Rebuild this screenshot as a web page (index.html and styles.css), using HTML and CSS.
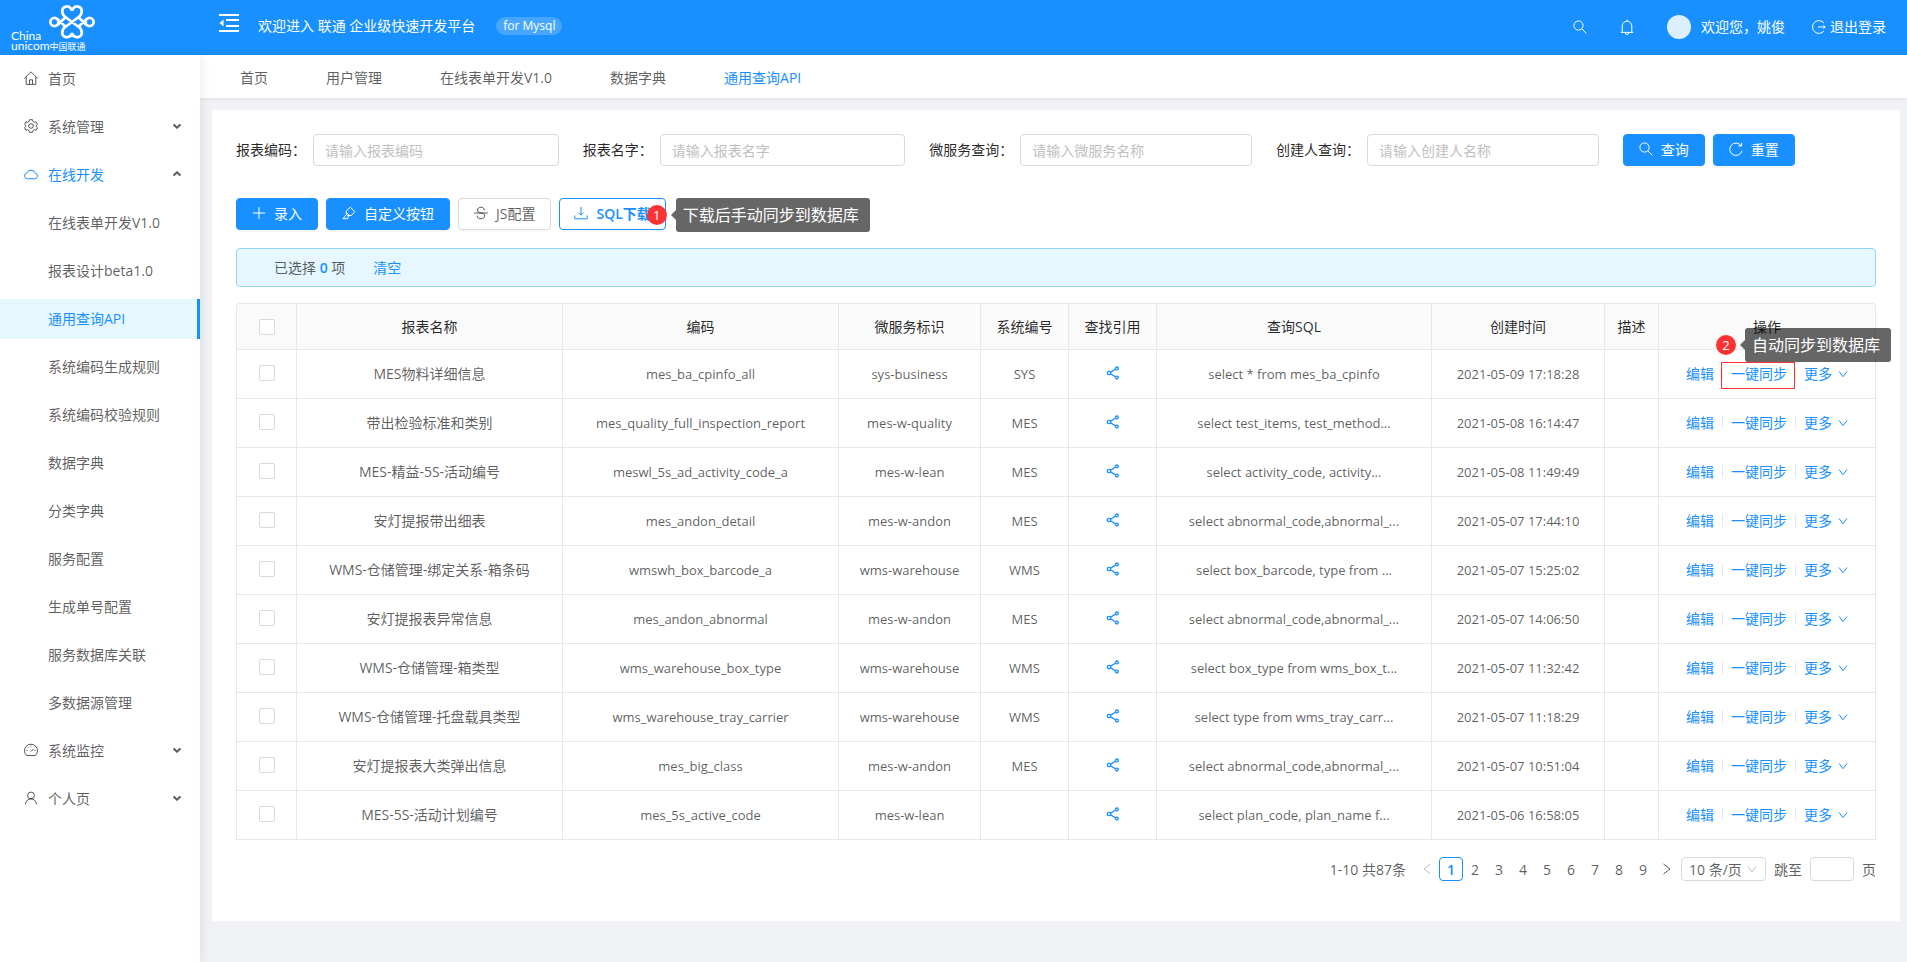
FILE: index.html
```html
<!DOCTYPE html>
<html lang="zh-CN">
<head>
    <meta charset="UTF-8">
    <meta name="viewport" content="width=device-width, initial-scale=1.0">
    <title>通用查询API</title>
    <link rel="stylesheet" href="styles.css">
</head>
<body>
    <!-- icons -->
    <svg class="sprite" aria-hidden="true">
        <symbol id="i-home" viewBox="0 0 14 14"><path d="M.4 7.400 7 .8l6.600 6.600M2.200 6v7.400h9.600V6M5.500 13V8.800h3V13"/></symbol>
        <symbol id="i-setting" viewBox="0 0 14 14"><path d="M5.500.7h3l.5 1.800 1.300.8 1.800-.5 1.400 2.500-1.300 1.200v1l1.300 1.200-1.400 2.500-1.800-.5-1.300.8-.5 1.800h-3L5 11.500l-1.300-.8-1.800.5L.5 8.700l1.300-1.200v-1L.5 5.300l1.400-2.500 1.800.5L5 2.500z"/><circle cx="7" cy="7" r="2.300"/></symbol>
        <symbol id="i-cloud" viewBox="0 0 14 14"><path d="M3.300 11.800h7.400a2.900 2.900 0 0 0 .6-5.700 4.600 4.600 0 0 0-8.600 0 2.900 2.900 0 0 0 .6 5.700z"/></symbol>
        <symbol id="i-dash" viewBox="0 0 14 14"><path d="M2.600 12.500a6.500 6.500 0 1 1 8.800 0zM7 8.500l2.600-2.600M7 2.600v1M2.500 7.500h1M10.500 7.500h1M3.800 4.300l.7.700"/></symbol>
        <symbol id="i-user" viewBox="0 0 14 14"><circle cx="7" cy="4.500" r="3.400"/><path d="M1.500 13.300c.2-3.200 2.500-5.400 5.500-5.400s5.300 2.200 5.500 5.400"/></symbol>
        <symbol id="i-down" viewBox="0 0 10 10"><path d="M1 2.500 5 7.700 9 2.500"/></symbol>
        <symbol id="i-arrow" viewBox="0 0 10 10"><path d="M1.500 3.500 5 6.700l3.500-3.200"/></symbol>
        <symbol id="i-left" viewBox="0 0 10 14"><path d="M8.500 2 2 7l6.500 5"/></symbol>
        <symbol id="i-search" viewBox="0 0 14 14"><circle cx="5.500" cy="5.500" r="4.600"/><path d="m8.900 8.900 4.600 4.600"/></symbol>
        <symbol id="i-bell" viewBox="0 0 14 16"><path d="M.8 13.400h12.400M2.200 13V7a4.800 4.800 0 0 1 9.600 0v6M7 2.200V.5M5.200 13.700a1.800 1.800 0 0 0 3.600 0"/></symbol>
        <symbol id="i-logout" viewBox="0 0 14 14"><path d="M12 3.100a6.400 6.400 0 1 0 0 7.800M6 7h7.300M11.500 5.300 13.200 7l-1.700 1.700"/></symbol>
        <symbol id="i-reload" viewBox="0 0 14 14"><path d="M12 3.600a6.200 6.200 0 1 0 1 5.200M12.600.8v3.200H9.400"/></symbol>
        <symbol id="i-plus" viewBox="0 0 14 14"><path d="M7 1v12M1 7h12"/></symbol>
        <symbol id="i-light" viewBox="0 0 14 14"><path d="M8.300 1.200 12.800 5.700 9.300 9.500H5.500L4.300 8.300V5zM4.600 8.300 1 12.700h4.500l1.200-3M7.300 9.300 4.600 6.600"/></symbol>
        <symbol id="i-strike" viewBox="0 0 14 14"><path d="M.2 7h13.600M10.500 4.200C10.200 2.200 8.900 1.200 7 1.200S3.500 2.300 3.500 4.200C3.500 5.700 4.700 6.500 7 7s3.700 1.200 3.700 2.800S9.300 12.800 7 12.800s-3.700-1.100-3.900-3.100"/></symbol>
        <symbol id="i-download" viewBox="0 0 14 14"><path d="M7 1v8M4.500 6.700 7 9.200l2.500-2.500M.8 9.500v3.300h12.400V9.500"/></symbol>
        <symbol id="i-share" viewBox="0 0 14 14"><path d="m4.500 6.100 5-2.900M4.500 7.900l5 2.900"/><circle cx="3" cy="7" r="1.700"/><circle cx="10.900" cy="2.400" r="1.400"/><circle cx="10.900" cy="11.600" r="1.400"/></symbol>
    </svg>

    <header class="header">
        <div class="logo">
            <svg class="logo-knot" viewBox="130 8 136 106" aria-hidden="true">
                <path d="M155 70 179 47C167 39 165 20 178 16c9-3 18 2 20 12 2-10 11-15 20-12 13 4 11 23-1 31l24 23M155 52l24 23c-12 8-14 26-1 30 9 3 18-2 20-11 2 9 11 14 20 11 13-4 11-22-1-30l24-23M179 47l38 28M217 47l-38 28"/>
                <circle cx="146" cy="61" r="12"/>
                <circle cx="250" cy="61" r="12"/>
            </svg>
            <div class="logo-text"><span>China</span><span>unicom<small>中国联通</small></span></div>
        </div>
        <button class="fold" aria-label="收起菜单">
            <svg viewBox="0 0 20 18" aria-hidden="true"><path d="M0 1h20M7 6h13M7 12h13M0 17h20"/><path class="solid" d="M4.500 5.500v7L.500 9z"/></svg>
        </button>
        <span class="title">欢迎进入 联通 企业级快速开发平台</span>
        <span class="db">for Mysql</span>
        <div class="header-right">
            <button class="bare" aria-label="搜索"><svg class="icon"><use href="#i-search"/></svg></button>
            <button class="bare" aria-label="通知"><svg class="icon bell"><use href="#i-bell"/></svg></button>
            <div class="welcome"><span class="avatar"></span><span>欢迎您，姚俊</span></div>
            <a href="#" class="logout"><svg class="icon"><use href="#i-logout"/></svg>退出登录</a>
        </div>
    </header>

    <div class="layout">
        <nav class="sidebar">
            <a href="#"><svg class="icon"><use href="#i-home"/></svg>首页</a>
            <a href="#"><svg class="icon"><use href="#i-setting"/></svg>系统管理<svg class="arrow"><use href="#i-arrow"/></svg></a>
            <a href="#" class="open"><svg class="icon"><use href="#i-cloud"/></svg>在线开发<svg class="arrow up"><use href="#i-arrow"/></svg></a>
            <a href="#" class="sub">在线表单开发V1.0</a>
            <a href="#" class="sub">报表设计beta1.0</a>
            <a href="#" class="sub active">通用查询API</a>
            <a href="#" class="sub">系统编码生成规则</a>
            <a href="#" class="sub">系统编码校验规则</a>
            <a href="#" class="sub">数据字典</a>
            <a href="#" class="sub">分类字典</a>
            <a href="#" class="sub">服务配置</a>
            <a href="#" class="sub">生成单号配置</a>
            <a href="#" class="sub">服务数据库关联</a>
            <a href="#" class="sub">多数据源管理</a>
            <a href="#"><svg class="icon"><use href="#i-dash"/></svg>系统监控<svg class="arrow"><use href="#i-arrow"/></svg></a>
            <a href="#"><svg class="icon"><use href="#i-user"/></svg>个人页<svg class="arrow"><use href="#i-arrow"/></svg></a>
        </nav>

        <main class="main">
            <div class="tabs">
                <a href="#">首页</a>
                <a href="#">用户管理</a>
                <a href="#">在线表单开发V1.0</a>
                <a href="#">数据字典</a>
                <a href="#" class="active">通用查询API</a>
            </div>

            <section class="card">
                <form class="search">
                    <div class="field"><label for="code">报表编码：</label><input id="code" type="text" placeholder="请输入报表编码"></div>
                    <div class="field"><label for="name">报表名字：</label><input id="name" type="text" placeholder="请输入报表名字"></div>
                    <div class="field"><label for="service">微服务查询：</label><input id="service" type="text" placeholder="请输入微服务名称"></div>
                    <div class="field"><label for="creator">创建人查询：</label><input id="creator" type="text" placeholder="请输入创建人名称"></div>
                    <div class="search-btns">
                        <button type="button" class="btn primary"><svg class="icon"><use href="#i-search"/></svg>查询</button>
                        <button type="button" class="btn primary"><svg class="icon"><use href="#i-reload"/></svg>重置</button>
                    </div>
                </form>

                <div class="toolbar">
                    <button class="btn primary"><svg class="icon"><use href="#i-plus"/></svg>录入</button>
                    <button class="btn primary"><svg class="icon"><use href="#i-light"/></svg>自定义按钮</button>
                    <button class="btn"><svg class="icon"><use href="#i-strike"/></svg>JS配置</button>
                    <div class="mark-wrap">
                        <button class="btn ghost"><svg class="icon"><use href="#i-download"/></svg>SQL下载</button>
                        <span class="num num-download">1</span>
                        <span class="tip tip-download">下载后手动同步到数据库</span>
                    </div>
                </div>

                <div class="alert">
                    <span>已选择 <b>0</b> 项</span>
                    <a href="#">清空</a>
                </div>

                <table class="table">
                    <colgroup>
                        <col class="c-check"><col class="c-name"><col class="c-code"><col class="c-service"><col class="c-sys"><col class="c-ref"><col class="c-sql"><col class="c-time"><col class="c-desc"><col class="c-action">
                    </colgroup>
                    <thead>
                        <tr>
                            <th><input type="checkbox" aria-label="全选"></th>
                            <th>报表名称</th>
                            <th>编码</th>
                            <th>微服务标识</th>
                            <th>系统编号</th>
                            <th>查找引用</th>
                            <th>查询SQL</th>
                            <th>创建时间</th>
                            <th>描述</th>
                            <th>操作</th>
                        </tr>
                    </thead>
                    <tbody>
                        <tr>
                            <td><input type="checkbox" aria-label="选择"></td>
                            <td>MES物料详细信息</td>
                            <td class="en">mes_ba_cpinfo_all</td>
                            <td class="en">sys-business</td>
                            <td class="en">SYS</td>
                            <td><a href="#" aria-label="引用"><svg class="icon share"><use href="#i-share"/></svg></a></td>
                            <td class="en">select * from mes_ba_cpinfo</td>
                            <td class="en">2021-05-09 17:18:28</td>
                            <td></td>
                            <td>
                                <div class="actions">
                                    <a href="#">编辑</a><i></i>
                                    <span class="mark-wrap">
                                        <a href="#">一键同步</a>
                                        <span class="frame"></span>
                                        <span class="num num-sync">2</span>
                                        <span class="tip tip-sync">自动同步到数据库</span>
                                    </span><i></i>
                                    <a href="#">更多<svg class="down"><use href="#i-down"/></svg></a>
                                </div>
                            </td>
                        </tr>
                        <tr>
                            <td><input type="checkbox" aria-label="选择"></td>
                            <td>带出检验标准和类别</td>
                            <td class="en">mes_quality_full_inspection_report</td>
                            <td class="en">mes-w-quality</td>
                            <td class="en">MES</td>
                            <td><a href="#" aria-label="引用"><svg class="icon share"><use href="#i-share"/></svg></a></td>
                            <td class="en">select test_items, test_method...</td>
                            <td class="en">2021-05-08 16:14:47</td>
                            <td></td>
                            <td><div class="actions"><a href="#">编辑</a><i></i><a href="#">一键同步</a><i></i><a href="#">更多<svg class="down"><use href="#i-down"/></svg></a></div></td>
                        </tr>
                        <tr>
                            <td><input type="checkbox" aria-label="选择"></td>
                            <td>MES-精益-5S-活动编号</td>
                            <td class="en">meswl_5s_ad_activity_code_a</td>
                            <td class="en">mes-w-lean</td>
                            <td class="en">MES</td>
                            <td><a href="#" aria-label="引用"><svg class="icon share"><use href="#i-share"/></svg></a></td>
                            <td class="en">select activity_code, activity...</td>
                            <td class="en">2021-05-08 11:49:49</td>
                            <td></td>
                            <td><div class="actions"><a href="#">编辑</a><i></i><a href="#">一键同步</a><i></i><a href="#">更多<svg class="down"><use href="#i-down"/></svg></a></div></td>
                        </tr>
                        <tr>
                            <td><input type="checkbox" aria-label="选择"></td>
                            <td>安灯提报带出细表</td>
                            <td class="en">mes_andon_detail</td>
                            <td class="en">mes-w-andon</td>
                            <td class="en">MES</td>
                            <td><a href="#" aria-label="引用"><svg class="icon share"><use href="#i-share"/></svg></a></td>
                            <td class="en">select abnormal_code,abnormal_...</td>
                            <td class="en">2021-05-07 17:44:10</td>
                            <td></td>
                            <td><div class="actions"><a href="#">编辑</a><i></i><a href="#">一键同步</a><i></i><a href="#">更多<svg class="down"><use href="#i-down"/></svg></a></div></td>
                        </tr>
                        <tr>
                            <td><input type="checkbox" aria-label="选择"></td>
                            <td>WMS-仓储管理-绑定关系-箱条码</td>
                            <td class="en">wmswh_box_barcode_a</td>
                            <td class="en">wms-warehouse</td>
                            <td class="en">WMS</td>
                            <td><a href="#" aria-label="引用"><svg class="icon share"><use href="#i-share"/></svg></a></td>
                            <td class="en">select box_barcode, type from ...</td>
                            <td class="en">2021-05-07 15:25:02</td>
                            <td></td>
                            <td><div class="actions"><a href="#">编辑</a><i></i><a href="#">一键同步</a><i></i><a href="#">更多<svg class="down"><use href="#i-down"/></svg></a></div></td>
                        </tr>
                        <tr>
                            <td><input type="checkbox" aria-label="选择"></td>
                            <td>安灯提报表异常信息</td>
                            <td class="en">mes_andon_abnormal</td>
                            <td class="en">mes-w-andon</td>
                            <td class="en">MES</td>
                            <td><a href="#" aria-label="引用"><svg class="icon share"><use href="#i-share"/></svg></a></td>
                            <td class="en">select abnormal_code,abnormal_...</td>
                            <td class="en">2021-05-07 14:06:50</td>
                            <td></td>
                            <td><div class="actions"><a href="#">编辑</a><i></i><a href="#">一键同步</a><i></i><a href="#">更多<svg class="down"><use href="#i-down"/></svg></a></div></td>
                        </tr>
                        <tr>
                            <td><input type="checkbox" aria-label="选择"></td>
                            <td>WMS-仓储管理-箱类型</td>
                            <td class="en">wms_warehouse_box_type</td>
                            <td class="en">wms-warehouse</td>
                            <td class="en">WMS</td>
                            <td><a href="#" aria-label="引用"><svg class="icon share"><use href="#i-share"/></svg></a></td>
                            <td class="en">select box_type from wms_box_t...</td>
                            <td class="en">2021-05-07 11:32:42</td>
                            <td></td>
                            <td><div class="actions"><a href="#">编辑</a><i></i><a href="#">一键同步</a><i></i><a href="#">更多<svg class="down"><use href="#i-down"/></svg></a></div></td>
                        </tr>
                        <tr>
                            <td><input type="checkbox" aria-label="选择"></td>
                            <td>WMS-仓储管理-托盘载具类型</td>
                            <td class="en">wms_warehouse_tray_carrier</td>
                            <td class="en">wms-warehouse</td>
                            <td class="en">WMS</td>
                            <td><a href="#" aria-label="引用"><svg class="icon share"><use href="#i-share"/></svg></a></td>
                            <td class="en">select type from wms_tray_carr...</td>
                            <td class="en">2021-05-07 11:18:29</td>
                            <td></td>
                            <td><div class="actions"><a href="#">编辑</a><i></i><a href="#">一键同步</a><i></i><a href="#">更多<svg class="down"><use href="#i-down"/></svg></a></div></td>
                        </tr>
                        <tr>
                            <td><input type="checkbox" aria-label="选择"></td>
                            <td>安灯提报表大类弹出信息</td>
                            <td class="en">mes_big_class</td>
                            <td class="en">mes-w-andon</td>
                            <td class="en">MES</td>
                            <td><a href="#" aria-label="引用"><svg class="icon share"><use href="#i-share"/></svg></a></td>
                            <td class="en">select abnormal_code,abnormal_...</td>
                            <td class="en">2021-05-07 10:51:04</td>
                            <td></td>
                            <td><div class="actions"><a href="#">编辑</a><i></i><a href="#">一键同步</a><i></i><a href="#">更多<svg class="down"><use href="#i-down"/></svg></a></div></td>
                        </tr>
                        <tr>
                            <td><input type="checkbox" aria-label="选择"></td>
                            <td>MES-5S-活动计划编号</td>
                            <td class="en">mes_5s_active_code</td>
                            <td class="en">mes-w-lean</td>
                            <td class="en"></td>
                            <td><a href="#" aria-label="引用"><svg class="icon share"><use href="#i-share"/></svg></a></td>
                            <td class="en">select plan_code, plan_name f...</td>
                            <td class="en">2021-05-06 16:58:05</td>
                            <td></td>
                            <td><div class="actions"><a href="#">编辑</a><i></i><a href="#">一键同步</a><i></i><a href="#">更多<svg class="down"><use href="#i-down"/></svg></a></div></td>
                        </tr>
                    </tbody>
                </table>

                <div class="pager">
                    <span class="total">1-10 共87条</span>
                    <button class="page prev" aria-label="上一页" disabled><svg class="step"><use href="#i-left"/></svg></button>
                    <button class="page current">1</button>
                    <button class="page">2</button>
                    <button class="page">3</button>
                    <button class="page">4</button>
                    <button class="page">5</button>
                    <button class="page">6</button>
                    <button class="page">7</button>
                    <button class="page">8</button>
                    <button class="page">9</button>
                    <button class="page" aria-label="下一页"><svg class="step next"><use href="#i-left"/></svg></button>
                    <div class="size">
                        <select aria-label="每页条数"><option>10 条/页</option></select>
                        <svg class="down"><use href="#i-down"/></svg>
                    </div>
                    <label for="jump">跳至</label>
                    <input id="jump" class="jump" type="text">
                    <span>页</span>
                </div>
            </section>
        </main>
    </div>
</body>
</html>
```
FILE: styles.css
```css
* {
    box-sizing: border-box;
}
body {
    margin: 0;
    min-height: 100vh;
    display: flex;
    flex-direction: column;
    background: #f0f2f5;
    color: rgba(0, 0, 0, 0.65);
    font-family: "Open Sans", "Noto Sans CJK SC", sans-serif;
    font-size: 14px;
    line-height: 21px;
}
a {
    color: #1890ff;
    text-decoration: none;
}
button, input, select {
    font: inherit;
    color: inherit;
}
button {
    cursor: pointer;
}
svg {
    fill: none;
    stroke: currentColor;
    flex: none;
}
.sprite {
    position: absolute;
    width: 0;
    height: 0;
}
.icon {
    width: 14px;
    height: 14px;
}

/* header */
.header {
    display: flex;
    align-items: center;
    height: 55px;
    padding-right: 21px;
    background: #1890ff;
    color: #fff;
}
.logo {
    position: relative;
    width: 219px;
    height: 55px;
    padding-top: 31px;
}
.logo-knot {
    position: absolute;
    left: 49px;
    top: 4px;
    width: 46px;
    height: 36px;
    stroke-width: 8px;
}
.logo-text {
    display: flex;
    flex-direction: column;
    padding-left: 11px;
    font-family: "Lato", "Noto Sans CJK SC", sans-serif;
    font-size: 12px;
    line-height: 10px;
}
.logo-text small {
    font-size: 9px;
}
.fold {
    display: flex;
    padding: 0;
    border: 0;
    background: none;
    margin: 0 19px 9px 0;
}
.fold svg {
    width: 20px;
    height: 18px;
    stroke-width: 2px;
}
.fold .solid {
    fill: currentColor;
    stroke: none;
}
.title {
    margin-bottom: 4px;
}
.db {
    margin: 0 0 4px 21px;
    padding: 0 7px;
    border-radius: 9px;
    background: rgba(255, 255, 255, 0.2);
    font-size: 12px;
    line-height: 18px;
}
.header-right {
    display: flex;
    align-items: center;
    margin-left: auto;
    padding-bottom: 2px;
}
.bare {
    display: flex;
    padding: 0;
    border: 0;
    background: none;
    margin-right: 33px;
}
.bell {
    height: 16px;
}
.welcome {
    display: flex;
    align-items: center;
    gap: 10px;
    margin-right: 27px;
}
.avatar {
    width: 24px;
    height: 24px;
    border-radius: 50%;
    background: #dcefff;
}
.logout {
    display: flex;
    align-items: center;
    gap: 4px;
    color: #fff;
}

/* sidebar */
.layout {
    display: flex;
    flex: 1;
}
.sidebar {
    flex: none;
    width: 200px;
    padding-top: 4px;
    background: #fff;
    box-shadow: 2px 0 10px rgba(0, 21, 41, 0.08);
    z-index: 1;
}
.sidebar a {
    display: flex;
    align-items: center;
    gap: 10px;
    height: 40px;
    margin-bottom: 8px;
    padding: 0 18px 2px 24px;
    color: rgba(0, 0, 0, 0.65);
}
.sidebar a.sub {
    padding-left: 48px;
}
.sidebar a.open {
    color: #1890ff;
}
.sidebar a.active {
    background: #e6f7ff;
    border-right: 3px solid #1890ff;
    color: #1890ff;
}
.arrow {
    width: 10px;
    height: 10px;
    margin-left: auto;
    color: #595959;
    stroke-width: 2px;
}
.arrow.up {
    transform: rotate(180deg);
}

/* tabs */
.main {
    flex: 1;
    min-width: 0;
}
.tabs {
    display: flex;
    gap: 58px;
    height: 43px;
    padding: 12px 40px 0;
    background: #fff;
    box-shadow: 0 1px 4px rgba(0, 21, 41, 0.08);
}
.tabs a {
    color: rgba(0, 0, 0, 0.65);
}
.tabs a.active {
    color: #1890ff;
}

/* content */
.card {
    margin: 12px 7px 41px 12px;
    padding: 24px 24px 40px;
    border-radius: 2px;
    background: #fff;
}
.search {
    display: grid;
    grid-template-columns: repeat(24, 1fr);
    column-gap: 24px;
}
.field {
    grid-column: span 5;
    display: flex;
    align-items: center;
    gap: 7px;
    color: rgba(0, 0, 0, 0.85);
}
.field label {
    padding-bottom: 2px;
}
.field input {
    flex: 1;
    min-width: 0;
    height: 32px;
    padding: 4px 11px;
    border: 1px solid #d9d9d9;
    border-radius: 4px;
}
.field input::placeholder {
    color: #bfbfbf;
}
.search-btns {
    grid-column: span 4;
    display: flex;
    gap: 8px;
}
.btn {
    display: flex;
    align-items: center;
    gap: 8px;
    height: 32px;
    padding: 0 15px 2px;
    border: 1px solid #d9d9d9;
    border-radius: 4px;
    background: #fff;
    box-shadow: 0 2px 0 rgba(0, 0, 0, 0.02);
    white-space: nowrap;
}
.btn.primary {
    border-color: #1890ff;
    background: #1890ff;
    color: #fff;
    box-shadow: 0 2px 0 rgba(0, 0, 0, 0.04);
}
.btn.ghost {
    padding: 0 14px 2px;
    border-color: #1890ff;
    color: #1890ff;
    font-weight: 600;
}
.toolbar {
    display: flex;
    gap: 8px;
    margin: 32px 0 18px;
}
.alert {
    display: flex;
    gap: 28px;
    padding: 8px 37px;
    border: 1px solid #91d5ff;
    border-radius: 4px;
    background: #e6f7ff;
}
.alert b {
    color: #1890ff;
    font-weight: 600;
}

/* numbered marks */
.mark-wrap {
    position: relative;
}
.num {
    position: absolute;
    width: 20px;
    height: 20px;
    border-radius: 50%;
    background: #fd3333;
    color: #fff;
    font-size: 13px;
    line-height: 20px;
    text-align: center;
}
.tip {
    position: absolute;
    height: 34px;
    padding: 0 11px 0 7px;
    border-radius: 3px;
    background: rgba(0, 0, 0, 0.6);
    color: #fff;
    font-size: 16px;
    line-height: 34px;
    white-space: nowrap;
}
.tip::before {
    content: "";
    position: absolute;
    right: 100%;
    top: 12px;
    border: 5px solid transparent;
    border-left-width: 0;
    border-right-color: rgba(0, 0, 0, 0.6);
}
.num-download {
    right: -1px;
    top: 7px;
}
.tip-download {
    left: 100%;
    top: 0;
    margin-left: 10px;
}
.frame {
    position: absolute;
    left: -10px;
    right: -8px;
    top: -1px;
    height: 27px;
    border: 1px solid #fd3333;
    pointer-events: none;
}
.num-sync {
    left: -15px;
    top: -28px;
}
.tip-sync {
    left: 14px;
    top: -35px;
}

/* table */
.table {
    width: 100%;
    margin-top: 16px;
    border: 1px solid #e8e8e8;
    border-width: 1px 0 0 1px;
    border-radius: 4px 4px 0 0;
    border-collapse: separate;
    border-spacing: 0;
    table-layout: fixed;
}
.c-check { width: 60px; }
.c-name { width: 266px; }
.c-code { width: 276px; }
.c-service { width: 142px; }
.c-sys, .c-ref { width: 88px; }
.c-sql { width: 275px; }
.c-time { width: 173px; }
.c-desc { width: 54px; }
.c-action { width: 217px; }
.table th,
.table td {
    height: 49px;
    padding: 0 0 2px;
    border: 1px solid #e8e8e8;
    border-width: 0 1px 1px 0;
    text-align: center;
    white-space: nowrap;
}
.table th {
    height: 46px;
    padding: 0;
    background: #fafafa;
    color: rgba(0, 0, 0, 0.85);
    font-weight: normal;
}
.table th:first-child {
    border-top-left-radius: 4px;
}
.table th:last-child {
    border-top-right-radius: 4px;
}
.table .en {
    padding: 0;
    font-size: 13px;
}
.table input {
    appearance: none;
    display: block;
    width: 16px;
    height: 16px;
    margin: 0 auto;
    border: 1px solid #d9d9d9;
    border-radius: 2px;
    background: #fff;
}
.share {
    display: block;
    margin: 0 auto;
    stroke-width: 1.3px;
}
.actions {
    display: flex;
    align-items: center;
    justify-content: center;
    gap: 8px;
}
.actions i {
    width: 1px;
    height: 13px;
    background: #e8e8e8;
}
.down {
    width: 10px;
    height: 10px;
    margin-left: 6px;
}

/* pager */
.pager {
    display: flex;
    align-items: center;
    justify-content: flex-end;
    margin-top: 17px;
}
.total {
    margin-right: 9px;
}
.page {
    display: flex;
    align-items: center;
    justify-content: center;
    width: 24px;
    height: 24px;
    padding: 0;
    border: 1px solid transparent;
    border-radius: 4px;
    background: none;
}
.page.current {
    border-color: #1890ff;
    color: #1890ff;
    font-weight: 600;
}
.page.prev {
    color: #bfbfbf;
}
.step {
    width: 10px;
    height: 14px;
}
.step.next {
    transform: rotate(180deg);
}
.size {
    position: relative;
    margin: 0 8px 0 2px;
}
.size select {
    appearance: none;
    width: 85px;
    height: 24px;
    padding: 0 7px;
    border: 1px solid #d9d9d9;
    border-radius: 4px;
    background: #fff;
}
.size .down {
    position: absolute;
    right: 9px;
    top: 7px;
    color: #bfbfbf;
    pointer-events: none;
}
.jump {
    width: 44px;
    height: 24px;
    margin: 0 8px;
    border: 1px solid #d9d9d9;
    border-radius: 4px;
}
```
